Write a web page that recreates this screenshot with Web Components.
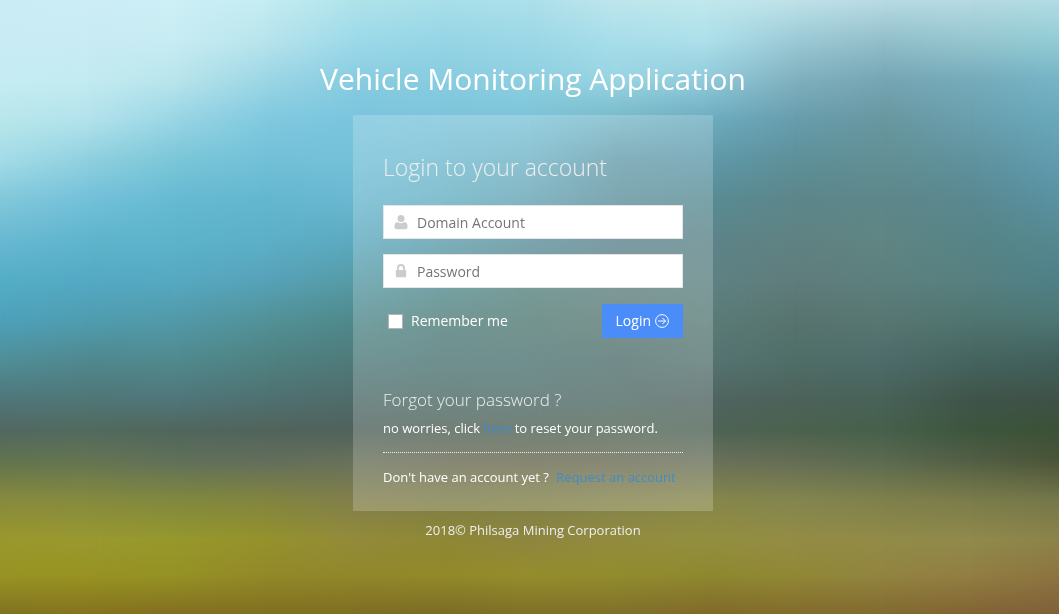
<!DOCTYPE html>
<html lang="en">
<head>
<meta charset="utf-8">
<meta name="viewport" content="width=device-width, initial-scale=1">
<title>Vehicle Monitoring Application</title>
<style>
html, body { margin: 0; min-height: 100%; }
body { font: 13px/20px "Open Sans", "Noto Sans", sans-serif; color: #fff; }
</style>
</head>
<body>
<login-page>
  <span slot="title">Vehicle Monitoring Application</span>
  <login-card></login-card>
  <span slot="footer">2018© Philsaga Mining Corporation</span>
</login-page>
<script>
// Soft landscape: vertical gradients cross-faded from left to right.
class ScenicBackdrop extends HTMLElement {
  constructor() {
    super();
    const root = this.attachShadow({ mode: 'open' });
    const rows = [0, 40, 80, 120, 160, 200, 240, 280, 320, 360, 400, 430, 460, 500, 540, 575, 614];
    const columns = [
      'caedf6 c9ecf4 c6ecf3 b8e7eb a4dce8 82c8da 69b9d3 53aec6 4ea1bb 508f98 50767a 526862 60744f 888a3e 9a982c 989424 827222',
      'ccedf6 c9ebf4 c2ebf0 b2e2ec 8fd0de 73c0da 5fb5cc 54a9c4 4f9db0 50888f 4f7676 526a5e 647453 858a3e 999930 989322 84731f',
      'cdeff6 c8ecf3 b8e4ec 98d5e4 7ac6d8 66bad2 5cb4cb 56a9c1 5299a9 508a8e 50767a 50665c 60705a 80883f 96982c 959224 826f22',
      'c5ecf2 b8e4ec 9cd6e5 80c9df 72c0d8 63b7cf 5cb0c8 57a2ba 529298 4f8282 4f7070 51645c 626e5c 82853f 95922c 93882a 80701f',
      'b0e3ea 9ddaea 88cce0 7ac5de 74c0d9 6ab7d0 5caac0 569ba6 4f898c 4f7a7a 4f6c6a 50625c 67705a 817f4c 938b3a 91882b 7f6e22',
      'a8dfe9 96d5e5 88cce0 7cc4da 70bad0 65b0c2 5c9cab 548d92 4f7e7a 4c7474 4c6a66 4f6056 686a54 7e7d48 8f8834 92892a 7c6c26',
      'ace0ea 9cd7e6 8ccfe0 7cc3d8 70b3c6 65a3b3 5a8f9d 56857f 527a74 4c7472 4e6a67 4f6256 67684f 7f7f48 8f8640 958d2c 7e7028',
      'bee6ec a8deea 98d4e2 77b8c7 659cab 5e909c 5b838d 5f8082 597972 4f6f6d 4e6964 516556 686a54 83834c 928c3e 928c2e 80702a',
      'c0e8ec ade0ea 90cadb 6cacbf 6099aa 588c94 5c8489 5e8283 5a7c78 567472 506460 4e6356 68705a 86864a 938f3f 8f8830 806a2a',
      'bfe2e9 9ccad6 80b0be 679dae 5d9099 5c868a 608282 607c7c 58746f 4f6e68 4c625a 4c624e 646c54 838650 938c44 918836 826c2c',
      'b8dbe4 92bfca 76a5b4 68979f 628f94 5e868a 608583 5c807e 587672 4e6c6a 486258 46604b 5a6a50 7f804c 928b48 928440 826a30',
      'b5dae2 96c6cf 75abba 6a9fae 5f929d 5a8890 568487 588080 507570 46645f 3f5449 3d553e 525e45 7a7c4a 908a4c 927e42 826434',
      'b2dce4 92ccd4 75b4c6 68a8ba 619cb0 5892a2 54898f 4e8088 4d7674 42605c 3e5248 3b5236 4a5438 74774a 8c834a 8c7440 80603a'
    ];
    const last = columns.length - 1;
    const layers = columns.map((c, i) => {
      const stops = c.split(' ').map((h, r) => `#${h} ${(rows[r] / 6.14).toFixed(2)}%`).join(',');
      const mask = i ? `mask-image:linear-gradient(90deg,transparent ${(i - 1) / last * 100}%,#000 ${i / last * 100}%)` : '';
      return `<div style="background:linear-gradient(${stops});${mask}"></div>`;
    }).join('');
    root.innerHTML = `<style>
      :host { position: fixed; inset: 0; z-index: -1; display: block; }
      div { position: absolute; inset: 0; }
    </style>${layers}`;
  }
}
customElements.define('scenic-backdrop', ScenicBackdrop);

function define(name, html) {
  const t = document.createElement('template');
  t.innerHTML = html;
  customElements.define(name, class extends HTMLElement {
    constructor() {
      super();
      this.attachShadow({ mode: 'open' }).append(t.content.cloneNode(true));
    }
  });
}

class IconField extends HTMLElement {
  connectedCallback() {
    if (this.shadowRoot) return;
    const root = this.attachShadow({ mode: 'open' });
    root.innerHTML = `<style>
      :host { display: block; }
      label { display: flex; align-items: center; height: 34px; box-sizing: border-box; background: #fff; border: 1px solid #e5e5e5; padding: 2px 0 0 10px; gap: 9px; }
      ::slotted(svg) { flex: none; width: 14px; height: 16px; fill: #ccc; }
      input { flex: 1; min-width: 0; border: 0; outline: 0; padding: 0; background: none; font: 14px/20px "Open Sans", sans-serif; color: #333; }
      input::placeholder { color: #757575; opacity: 1; }
    </style><label><slot></slot><input></label>`;
    const input = root.querySelector('input');
    input.type = this.getAttribute('type') || 'text';
    input.placeholder = this.getAttribute('label');
    input.setAttribute('aria-label', this.getAttribute('label'));
  }
}
customElements.define('icon-field', IconField);

define('check-option', `<style>
  :host { display: block; }
  label { display: flex; align-items: center; gap: 8px; padding-left: 5px; font-size: 14px; }
  input { appearance: none; width: 15px; height: 15px; margin: 0; background: #fff; border: 1px solid #b4b4b4; }
  input:checked { background: #4b8df8; }
</style><label><input type="checkbox"><slot></slot></label>`);

define('login-button', `<style>
  :host { display: block; }
  button { display: flex; align-items: center; gap: 4px; height: 34px; border: 0; padding: 0 14px; background: #4b8df8; color: #fff; font: 14px/20px "Open Sans", sans-serif; cursor: pointer; }
  svg { width: 14px; height: 14px; fill: none; stroke: #fff; }
</style><button type="submit"><slot></slot><svg viewBox="0 0 14 14" aria-hidden="true"><circle cx="7" cy="7" r="6.4"/><path d="M3 7h7.5M7.5 4l3 3-3 3"/></svg></button>`);

define('help-block', `<style>
  :host { display: block; }
  h4 { margin: 0 0 7px; font-size: 17px; line-height: 22px; font-weight: 300; color: #eee; }
  p { margin: 0; }
  ::slotted(a) { color: #428bca; text-decoration: none; }
</style><h4><slot name="heading"></slot></h4><p><slot></slot></p>`);

define('sign-up', `<style>
  :host { display: block; border-top: 1px dotted #eee; padding-top: 14px; margin-top: 14px; }
  ::slotted(a) { color: #428bca; text-decoration: none; margin-left: 4px; }
  p { margin: 0; }
</style><p><slot></slot></p>`);

define('login-card', `<style>
  :host { display: block; box-sizing: border-box; width: 100%; max-width: 360px; padding: 30px 30px 24px; background: rgba(255,255,255,.2); }
  h3 { margin: 0 0 16px; font-size: 23px; line-height: 44px; font-weight: 300; color: #eee; }
  form { display: grid; gap: 15px; margin-bottom: 51px; }
  .actions { display: flex; justify-content: space-between; align-items: center; padding-top: 1px; }
</style>
<h3>Login to your account</h3>
<form onsubmit="return false">
  <icon-field label="Domain Account"><svg viewBox="0 0 14 16" aria-hidden="true"><circle cx="7" cy="3.6" r="3.5"/><path d="M3.4 7.1Q7 9.6 10.6 7.1Q13.6 7.6 13.6 12Q13.4 14.2 11.4 14.2H2.6Q.6 14.2 .4 12Q.4 7.6 3.4 7.1Z"/></svg></icon-field>
  <icon-field type="password" label="Password"><svg viewBox="0 0 14 16" aria-hidden="true"><path fill-rule="evenodd" d="M3 6V4a4 4 0 0 1 8 0V6h.4q.8 0 .8.8v5.6q0 .8-.8.8H2.6q-.8 0-.8-.8V6.8q0-.8.8-.8ZM4.9 6h4.2V4a2.1 2.1 0 0 0-4.2 0Z"/></svg></icon-field>
  <div class="actions"><check-option>Remember me</check-option><login-button>Login</login-button></div>
</form>
<help-block><span slot="heading">Forgot your password ?</span>no worries, click <a href="#reset">here</a> to reset your password.</help-block>
<sign-up>Don't have an account yet ? <a href="#request">Request an account</a></sign-up>`);

define('login-page', `<style>
  :host { display: flex; flex-direction: column; align-items: center; padding: 58px 0 20px 7px; }
  h1 { margin: 0 0 15px; font-size: 30px; line-height: 42px; font-weight: 400; }
  footer { margin-top: 9px; color: #eee; }
</style><scenic-backdrop></scenic-backdrop><h1><slot name="title"></slot></h1><slot></slot><footer><slot name="footer"></slot></footer>`);
</script>
</body>
</html>
